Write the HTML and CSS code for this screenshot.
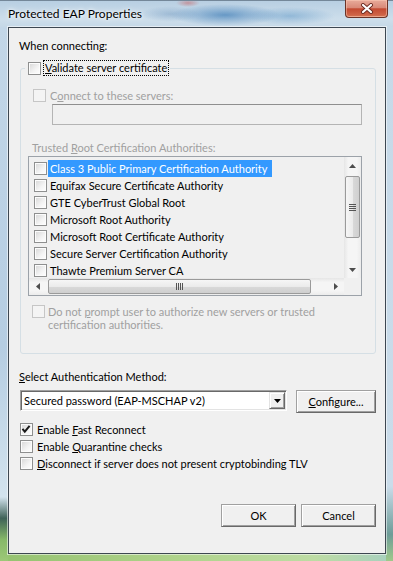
FILE: index.html
```html
<!DOCTYPE html>
<html lang="en">
<head>
  <meta charset="UTF-8">
  <title>Protected EAP Properties</title>
  <link rel="stylesheet" href="styles.css">
</head>
<body>
  <div class="window">
    <div class="titlebar">
      <span class="title">Protected EAP Properties</span>
      <span class="close">
        <svg width="14" height="11" viewBox="0 0 14 11">
          <path d="M3 2 L11 9 M11 2 L3 9" stroke="#6b2a20" stroke-width="4" stroke-linecap="round"/>
          <path d="M3 2 L11 9 M11 2 L3 9" stroke="#ffffff" stroke-width="2.2" stroke-linecap="round"/>
        </svg>
      </span>
    </div>

    <div class="frame">
      <div class="client">
        <div class="label">When connecting:</div>

        <fieldset class="group">
          <legend class="group-legend">
            <span class="check"></span>
            <span class="focus"><u>V</u>alidate server certificate</span>
          </legend>

          <div class="row connect-row disabled">
            <span class="check off"></span>
            <span>C<u>o</u>nnect to these servers:</span>
          </div>
          <div class="textbox"></div>

          <div class="label trusted disabled">Trusted <u>R</u>oot Certification Authorities:</div>

          <div class="listbox">
            <div class="list-items">
              <div class="item"><span class="check"></span><span class="item-text selected">Class 3 Public Primary Certification Authority</span></div>
              <div class="item"><span class="check"></span><span class="item-text">Equifax Secure Certificate Authority</span></div>
              <div class="item"><span class="check"></span><span class="item-text">GTE CyberTrust Global Root</span></div>
              <div class="item"><span class="check"></span><span class="item-text">Microsoft Root Authority</span></div>
              <div class="item"><span class="check"></span><span class="item-text">Microsoft Root Certificate Authority</span></div>
              <div class="item"><span class="check"></span><span class="item-text">Secure Server Certification Authority</span></div>
              <div class="item"><span class="check"></span><span class="item-text">Thawte Premium Server CA</span></div>
            </div>

            <div class="vscroll">
              <span class="arrow-box">
                <svg width="7" height="4" viewBox="0 0 7 4"><path d="M0 4 L3.5 0 L7 4 Z" fill="#4d4d4d"/></svg>
              </span>
              <span class="vthumb">
                <svg width="7" height="7" viewBox="0 0 7 7"><path d="M0 .5 H7 M0 2.5 H7 M0 4.5 H7 M0 6.5 H7" stroke="#555" stroke-width="1"/></svg>
              </span>
              <span class="spacer"></span>
              <span class="arrow-box">
                <svg width="7" height="4" viewBox="0 0 7 4"><path d="M0 0 L3.5 4 L7 0 Z" fill="#4d4d4d"/></svg>
              </span>
            </div>

            <div class="hscroll">
              <span class="arrow-box">
                <svg width="4" height="7" viewBox="0 0 4 7"><path d="M4 0 L0 3.5 L4 7 Z" fill="#4d4d4d"/></svg>
              </span>
              <span class="hthumb">
                <svg width="7" height="7" viewBox="0 0 7 7"><path d="M.5 0 V7 M2.5 0 V7 M4.5 0 V7 M6.5 0 V7" stroke="#555" stroke-width="1"/></svg>
              </span>
              <span class="spacer"></span>
              <span class="arrow-box">
                <svg width="4" height="7" viewBox="0 0 4 7"><path d="M0 0 L4 3.5 L0 7 Z" fill="#4d4d4d"/></svg>
              </span>
            </div>
            <div class="corner"></div>
          </div>

          <div class="row prompt-row disabled">
            <span class="check off"></span>
            <span>Do not <u>p</u>rompt user to authorize new servers or trusted<br>certification authorities.</span>
          </div>
        </fieldset>

        <div class="label method-label"><u>S</u>elect Authentication Method:</div>
        <div class="method-row">
          <div class="combo">
            <span class="combo-text">Secured password (EAP-MSCHAP v2)</span>
            <span class="combo-btn">
              <svg width="7" height="4" viewBox="0 0 7 4"><path d="M0 0 L3.5 4 L7 0 Z" fill="#000"/></svg>
            </span>
          </div>
          <button class="btn configure"><u>C</u>onfigure...</button>
        </div>

        <div class="options">
          <div class="row option">
            <span class="check on">
              <svg width="11" height="11" viewBox="0 0 11 11"><path d="M1.5 4.8 L3.8 7.6 L8.6 1.8" fill="none" stroke="#1a1a1a" stroke-width="2"/></svg>
            </span>
            <span>Enable <u>F</u>ast Reconnect</span>
          </div>
          <div class="row option">
            <span class="check"></span>
            <span>Enable <u>Q</u>uarantine checks</span>
          </div>
          <div class="row option">
            <span class="check"></span>
            <span><u>D</u>isconnect if server does not present cryptobinding TLV</span>
          </div>
        </div>

        <div class="actions">
          <button class="btn">OK</button>
          <button class="btn">Cancel</button>
        </div>
      </div>
    </div>
  </div>
</body>
</html>
```

FILE: styles.css
```css
body {
  margin: 0;
  font-family: 'Lato', 'Noto Sans', sans-serif;
  font-size: 11px;
  color: #000;
  background: #c0d4e4;
}
.window {
  width: 393px;
  height: 561px;
  display: flex;
  flex-direction: column;
  overflow: hidden;
}

/* glass title bar */
.titlebar {
  height: 27px;
  flex: none;
  display: flex;
  align-items: flex-start;
  padding-right: 5px;
  box-sizing: border-box;
  border-top: 1px solid rgba(50, 70, 90, 0.55);
  background:
    radial-gradient(ellipse 55px 11px at 225px 14px, rgba(70, 130, 185, 0.75), transparent),
    radial-gradient(ellipse 45px 9px at 290px 15px, rgba(100, 155, 200, 0.55), transparent),
    radial-gradient(ellipse 30px 8px at 170px 13px, rgba(110, 150, 190, 0.45), transparent),
    radial-gradient(ellipse 12px 4px at 188px 2px, rgba(200, 90, 90, 0.5), transparent),
    linear-gradient(to bottom, #b8cfe2, #cddeeb 70%, #c5d8e7);
}
.title {
  padding: 5px 0 0 8px;
  line-height: 16px;
  font-size: 12px;
  text-shadow: 0 0 6px #fff, 0 0 3px rgba(255, 255, 255, 0.9);
}
.close {
  margin-left: auto;
  margin-top: -1px;
  width: 43px;
  height: 18px;
  box-sizing: border-box;
  display: flex;
  align-items: center;
  justify-content: center;
  border: 1px solid #6b3327;
  border-top: none;
  border-radius: 0 0 4px 4px;
  background: linear-gradient(to bottom, #e8ab9b, #d98a78 45%, #c34a32 52%, #cf6648 90%, #e08a6a);
  box-shadow: inset 0 0 0 1px rgba(255, 210, 190, 0.45);
}

/* frame around client area */
.frame {
  flex: 1;
  padding: 0 7px 7px 8px;
  background:
    linear-gradient(to bottom, #c3d7e8, #b5cde2 60%, #d3e3ee 88%, #3f6258 92%, #86b868 96%, #9dc878) left top / 8px 100% no-repeat,
    linear-gradient(to bottom, #c6d9e8, #cadcea 86%, #6d9c98 95%, #9fc98a) right top / 7px 100% no-repeat,
    linear-gradient(to right, #95c270, #afd38b 45%, #bddca4 80%, #a7d0c0) left bottom / 100% 7px no-repeat,
    #c0d4e4;
}
.client {
  height: 100%;
  box-sizing: border-box;
  border: 1px solid #3d4751;
  box-shadow: 0 0 0 1px rgba(255, 255, 255, 0.55);
  background: #f0f0f0;
  padding: 10px 9px 0 10px;
}

.label {
  line-height: 15px;
}
.disabled {
  color: #a0a0a0;
}
.row {
  display: flex;
  align-items: center;
}

/* checkboxes */
.check {
  flex: none;
  width: 13px;
  height: 13px;
  box-sizing: border-box;
  border: 1px solid #8e8f8f;
  background: linear-gradient(135deg, #d6d6d6, #f4f4f4 60%, #fff);
  box-shadow: inset 0 0 0 1px #fcfcfc;
}
.check.off {
  border-color: #c6c6c6;
  background: #f4f4f4;
  box-shadow: none;
}
.check svg {
  display: block;
}

/* group box */
.group {
  margin: 7px 0 0 1px;
  width: 356px;
  box-sizing: border-box;
  border: 1px solid #d5dfe5;
  border-radius: 3px;
  padding: 0 0 22px 0;
  min-width: 0;
}
.group-legend {
  display: flex;
  align-items: center;
  height: 16px;
  margin-left: 4px;
  padding: 0 1px 0 3px;
}
.focus {
  margin-left: 2px;
  padding: 0 1px;
  line-height: 14px;
  border: 1px dotted #000;
}
.connect-row {
  margin-top: 13px;
  padding-left: 12px;
  height: 13px;
  gap: 4px;
}
.textbox {
  margin: 2px 0 0 31px;
  width: 310px;
  height: 21px;
  box-sizing: border-box;
  border: 1px solid #b4b4b4;
  border-top-color: #8f8f8f;
  background: #f0f0f0;
}
.trusted {
  margin-top: 15px;
  padding-left: 11px;
}

/* certificate list */
.listbox {
  margin: 1px 0 0 7px;
  width: 334px;
  height: 140px;
  box-sizing: border-box;
  border: 1px solid #9ca2a9;
  display: grid;
  grid-template-columns: 1fr 17px;
  grid-template-rows: 1fr 17px;
  background: #f0f0f0;
}
.list-items {
  padding-top: 3px;
  overflow: hidden;
}
.item {
  height: 17px;
  display: flex;
  align-items: center;
  padding-left: 5px;
  white-space: nowrap;
}
.item-text {
  margin-left: 1px;
  padding: 0 5px 0 2px;
  line-height: 17px;
}
.item-text.selected {
  background: #3399ff;
  color: #fff;
}
.vscroll {
  display: flex;
  flex-direction: column;
  align-items: center;
  background: linear-gradient(to right, #e6e6e6, #f5f5f5 25%, #f5f5f5 75%, #ececec);
}
.hscroll {
  display: flex;
  align-items: center;
  background: linear-gradient(to bottom, #e6e6e6, #f5f5f5 25%, #f5f5f5 75%, #ececec);
}
.arrow-box {
  flex: none;
  width: 17px;
  height: 17px;
  display: flex;
  align-items: center;
  justify-content: center;
}
.spacer {
  flex: 1;
}
.vthumb {
  margin-top: 2px;
  width: 15px;
  height: 62px;
  box-sizing: border-box;
  border: 1px solid #9a9a9a;
  border-radius: 2px;
  background: linear-gradient(to right, #f6f6f6, #ebebeb 50%, #d9d9d9 51%, #cfcfcf);
  display: flex;
  align-items: center;
  justify-content: center;
}
.hthumb {
  margin-left: 2px;
  width: 263px;
  height: 15px;
  box-sizing: border-box;
  border: 1px solid #9a9a9a;
  border-radius: 2px;
  background: linear-gradient(to bottom, #f6f6f6, #ebebeb 50%, #d9d9d9 51%, #cfcfcf);
  display: flex;
  align-items: center;
  justify-content: center;
}
.vthumb svg,
.hthumb svg {
  display: block;
}
.corner {
  background: #f0f0f0;
}

.prompt-row {
  margin-top: 9px;
  padding-left: 11px;
  align-items: flex-start;
  gap: 3px;
  line-height: 13px;
}

/* authentication method */
.method-label {
  margin-top: 15px;
}
.method-row {
  margin: 6px 0 0 1px;
  display: flex;
  align-items: flex-start;
  gap: 9px;
}
.combo {
  width: 267px;
  height: 21px;
  box-sizing: border-box;
  display: flex;
  align-items: center;
  border: 1px solid;
  border-color: #a0a0a0 #fff #fff #a0a0a0;
  box-shadow: inset 1px 1px #696969, inset -1px -1px #e3e3e3;
  background: #fff;
  padding: 1px;
}
.combo-text {
  flex: 1;
  padding-left: 2px;
}
.combo-btn {
  width: 16px;
  height: 17px;
  box-sizing: border-box;
  display: flex;
  align-items: center;
  justify-content: center;
  background: #f0f0f0;
  border: 1px solid;
  border-color: #e3e3e3 #696969 #696969 #e3e3e3;
  box-shadow: inset 1px 1px #fff, inset -1px -1px #a0a0a0;
}
.btn {
  width: 75px;
  height: 23px;
  padding: 0;
  font: inherit;
  color: #000;
  background: #f0f0f0;
  border: 1px solid;
  border-color: #a0a0a0 #696969 #696969 #a0a0a0;
  box-shadow: inset 1px 1px #fff, inset -1px -1px #a0a0a0;
}
.btn.configure {
  width: 80px;
}

.options {
  margin: 8px 0 0 1px;
}
.option {
  height: 17px;
  gap: 4px;
}

.actions {
  margin-top: 32px;
  display: flex;
  justify-content: flex-end;
  gap: 5px;
}
```
